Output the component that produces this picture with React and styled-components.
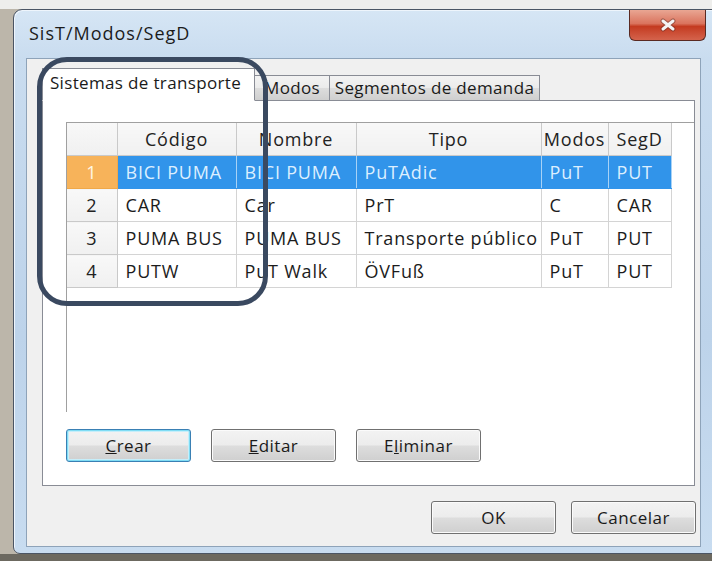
import React from "react";
import styled, { createGlobalStyle } from "styled-components";

const GlobalStyle = createGlobalStyle`
  html, body {
    margin: 0;
    width: 712px;
    height: 561px;
    overflow: hidden;
  }
  body {
    background: linear-gradient(to bottom, #eeeeec 0px, #eeeeec 9px, #bcb6aa 9px, #bcb6aa 554px, #6c6960 554px);
    font-family: "Open Sans", "Noto Sans", sans-serif;
  }
`;

const systems = [
  { id: 1, code: "BICI PUMA", name: "BICI PUMA", type: "PuTAdic", modes: "PuT", seg: "PUT" },
  { id: 2, code: "CAR", name: "Car", type: "PrT", modes: "C", seg: "CAR" },
  { id: 3, code: "PUMA BUS", name: "PUMA BUS", type: "Transporte público", modes: "PuT", seg: "PUT" },
  { id: 4, code: "PUTW", name: "PuT Walk", type: "ÖVFuß", modes: "PuT", seg: "PUT" },
];

const columns = [
  { key: "code", label: "Código", width: 119 },
  { key: "name", label: "Nombre", width: 120 },
  { key: "type", label: "Tipo", width: 185 },
  { key: "modes", label: "Modos", width: 67 },
  { key: "seg", label: "SegD", width: 63 },
];

const App = () => {
  const selected = 1;
  return (
    <>
      <GlobalStyle />
      <Window>
        <TitleBar>
          <Title>SisT/Modos/SegD</Title>
          <CloseButton>
            <svg width="18" height="14" viewBox="0 0 18 14">
              <path
                d="M4 3 L14 11 M14 3 L4 11"
                stroke="#5a2a22"
                strokeWidth="5"
                strokeLinecap="round"
                opacity="0.45"
              />
              <path
                d="M4 3 L14 11 M14 3 L4 11"
                stroke="#f4f4f4"
                strokeWidth="3"
                strokeLinecap="round"
              />
            </svg>
          </CloseButton>
        </TitleBar>

        <Client>
          <TabStrip>
            <Tab $active $width={213}>Sistemas de transporte</Tab>
            <Tab $width={75}>Modos</Tab>
            <Tab $width={210}>Segmentos de demanda</Tab>
          </TabStrip>

          <TabPanel>
            <GridBox>
              <GridTable>
                <colgroup>
                  <col style={{ width: 50 }} />
                  {columns.map((c) => (
                    <col key={c.key} style={{ width: c.width }} />
                  ))}
                </colgroup>
                <thead>
                  <tr>
                    <Corner />
                    {columns.map((c) => (
                      <HeadCell key={c.key}>{c.label}</HeadCell>
                    ))}
                  </tr>
                </thead>
                <tbody>
                  {systems.map((row) => (
                    <tr key={row.id}>
                      <RowHead $selected={row.id === selected}>{row.id}</RowHead>
                      {columns.map((c) => (
                        <Cell key={c.key} $selected={row.id === selected}>
                          {row[c.key]}
                        </Cell>
                      ))}
                    </tr>
                  ))}
                </tbody>
              </GridTable>
            </GridBox>

            <ButtonRow>
              <Button $default>
                <u>C</u>rear
              </Button>
              <Button>
                <u>E</u>ditar
              </Button>
              <Button>
                E<u>l</u>iminar
              </Button>
            </ButtonRow>
          </TabPanel>

          <DialogFooter>
            <Button>OK</Button>
            <Button>Cancelar</Button>
          </DialogFooter>
        </Client>

        <Annotation />
      </Window>
    </>
  );
};

const Window = styled.div`
  position: relative;
  box-sizing: border-box;
  margin: 9px 0 0 13px;
  width: 712px;
  height: 545px;
  border: 1px solid #4b5564;
  border-radius: 9px 9px 7px 7px;
  background: linear-gradient(to bottom, #d6e6f5 0%, #c9dcef 9%, #bdd3ea 60%, #c8dcf0 100%);
  box-shadow: inset 1px 1px 0 #eef5fc;
  padding: 0 0 6px 12px;
  display: flex;
  flex-direction: column;
`;

const TitleBar = styled.div`
  height: 48px;
  display: flex;
  justify-content: space-between;
  align-items: flex-start;
  padding-right: 18px;
`;

const Title = styled.span`
  margin: 11px 0 0 3px;
  font-family: "Open Sans", "Noto Sans", sans-serif;
  font-size: 18px;
  letter-spacing: 1px;
  color: #1b1b1b;
`;

const CloseButton = styled.div`
  box-sizing: border-box;
  width: 77px;
  height: 31px;
  border: 1px solid #5a2a22;
  border-top: none;
  border-radius: 0 0 6px 6px;
  background: linear-gradient(to bottom, #e9a693 0%, #da745e 45%, #c43b21 55%, #d4634c 100%);
  display: flex;
  align-items: center;
  justify-content: center;
`;

const Client = styled.div`
  box-sizing: border-box;
  width: 675px;
  height: 490px;
  border: 1px solid #8ea3b9;
  background: #f0f0f0;
  padding: 9px 5px 0 15px;
  display: flex;
  flex-direction: column;
`;

const TabStrip = styled.div`
  display: flex;
  align-items: flex-end;
  height: 33px;
  position: relative;
  z-index: 1;
`;

const Tab = styled.div`
  box-sizing: border-box;
  width: ${(p) => p.$width}px;
  height: ${(p) => (p.$active ? "33px" : "26px")};
  padding-right: ${(p) => (p.$active ? "6px" : "0")};
  border: 1px solid #898c95;
  border-bottom: 1px solid ${(p) => (p.$active ? "#ffffff" : "#898c95")};
  border-left: ${(p) => (p.$active ? "1px solid #898c95" : "none")};
  background: ${(p) =>
    p.$active
      ? "#ffffff"
      : "linear-gradient(to bottom, #f3f3f3 0%, #ebebeb 50%, #dddddd 51%, #cfcfcf 100%)"};
  font-size: 17px;
  letter-spacing: 0.35px;
  line-height: ${(p) => (p.$active ? "28px" : "24px")};
  text-align: center;
  color: #1a1a1a;
  white-space: nowrap;
  position: relative;
  z-index: ${(p) => (p.$active ? 2 : 1)};
`;

const TabPanel = styled.div`
  box-sizing: border-box;
  width: 653px;
  height: 386px;
  margin-top: -1px;
  border: 1px solid #898c95;
  background: #ffffff;
  padding: 21px 0 0 23px;
  display: flex;
  flex-direction: column;
`;

const GridBox = styled.div`
  box-sizing: border-box;
  width: 628px;
  height: 290px;
  border-left: 1px solid #a0a0a0;
  border-top: 1px solid #a0a0a0;
  background: #ffffff;
`;

const GridTable = styled.table`
  border-collapse: collapse;
  table-layout: fixed;
  width: 604px;
  font-family: "Open Sans", "Noto Sans", sans-serif;
  font-size: 18px;
  letter-spacing: 0.8px;

  tr {
    height: 33px;
  }
`;

const headBg = "linear-gradient(to bottom, #f8f8f8 0%, #f0f0f0 100%)";

const Corner = styled.th`
  background: ${headBg};
  border: 1px solid #c9c9c9;
  border-top: none;
  border-left: none;
`;

const HeadCell = styled.th`
  background: ${headBg};
  border: 1px solid #c9c9c9;
  border-top: none;
  font-weight: normal;
  color: #222;
  padding: 0;
  text-align: center;
  white-space: nowrap;
  overflow: hidden;
`;

const RowHead = styled.td`
  background: ${(p) => (p.$selected ? "#f7b35a" : headBg)};
  color: ${(p) => (p.$selected ? "#fff7e4" : "#222")};
  border: 1px solid ${(p) => (p.$selected ? "#f0a848" : "#c9c9c9")};
  border-left: none;
  text-align: center;
  padding: 0;
`;

const Cell = styled.td`
  background: ${(p) => (p.$selected ? "#3194ea" : "#ffffff")};
  color: ${(p) => (p.$selected ? "#dcefff" : "#1c1c1c")};
  border-right: 1px solid ${(p) => (p.$selected ? "#a8d2f6" : "#d4d4d4")};
  border-bottom: 1px solid ${(p) => (p.$selected ? "#3194ea" : "#d4d4d4")};
  padding: 0 0 0 8px;
  white-space: nowrap;
  overflow: hidden;
`;

const ButtonRow = styled.div`
  display: flex;
  gap: 20px;
  margin-top: 17px;
`;

const Button = styled.div`
  box-sizing: border-box;
  width: 125px;
  height: 33px;
  border: 1px solid ${(p) => (p.$default ? "#3a80b4" : "#707070")};
  border-radius: 3px;
  background: linear-gradient(to bottom, #f3f3f3 0%, #ececec 48%, #dddddd 52%, #cfcfcf 100%);
  box-shadow: ${(p) =>
    p.$default ? "inset 0 0 0 1px #7fdcf4, inset 0 0 0 2px #c6eefa" : "inset 0 0 0 1px #fbfbfb"};
  display: flex;
  align-items: center;
  justify-content: center;
  font-family: "Open Sans", "Noto Sans", sans-serif;
  font-size: 17px;
  letter-spacing: 0.5px;
  color: #1a1a1a;
`;

const DialogFooter = styled.div`
  display: flex;
  justify-content: flex-end;
  gap: 15px;
  margin-top: 15px;
  width: 654px;
`;

/* highlight ring drawn over the first tab and the code column */
const Annotation = styled.div`
  position: absolute;
  left: 23px;
  top: 47px;
  width: 231px;
  height: 249px;
  box-sizing: border-box;
  border: 5px solid #3a4960;
  border-radius: 30px;
  pointer-events: none;
  z-index: 5;
`;

export default App;
